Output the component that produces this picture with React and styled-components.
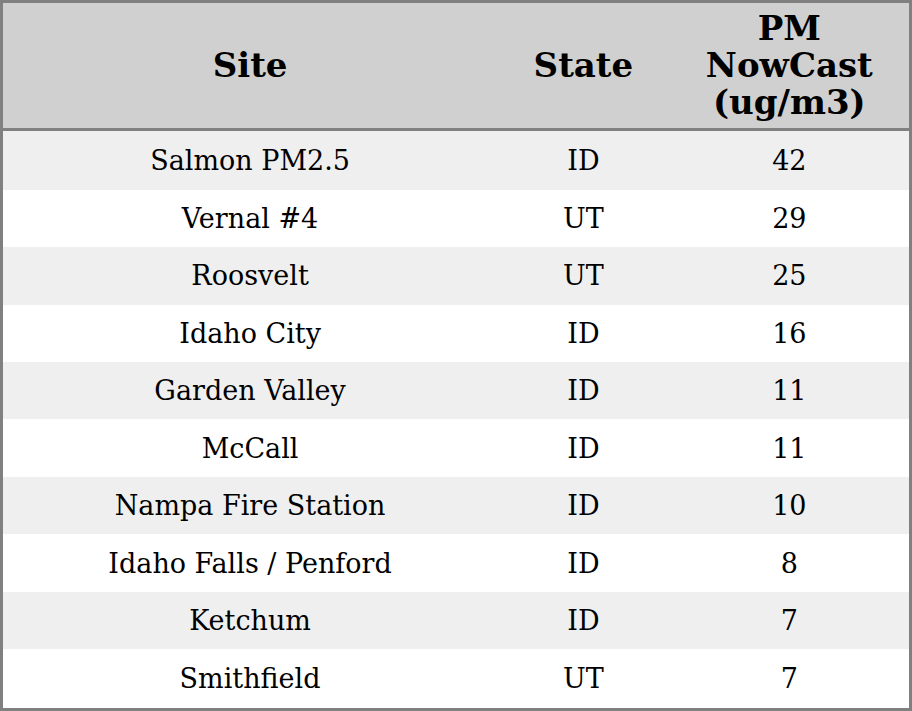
import React from 'react';
import styled, { createGlobalStyle } from 'styled-components';

const rows = [
  { site: 'Salmon PM2.5', state: 'ID', pm: 42 },
  { site: 'Vernal #4', state: 'UT', pm: 29 },
  { site: 'Roosvelt', state: 'UT', pm: 25 },
  { site: 'Idaho City', state: 'ID', pm: 16 },
  { site: 'Garden Valley', state: 'ID', pm: 11 },
  { site: 'McCall', state: 'ID', pm: 11 },
  { site: 'Nampa Fire Station', state: 'ID', pm: 10 },
  { site: 'Idaho Falls / Penford', state: 'ID', pm: 8 },
  { site: 'Ketchum', state: 'ID', pm: 7 },
  { site: 'Smithfield', state: 'UT', pm: 7 },
];

const GlobalStyle = createGlobalStyle`
  html, body, #root {
    margin: 0;
    height: 100%;
  }
  body {
    font-family: "DejaVu Serif", serif;
    background: #fff;
  }
`;

const Table = styled.table`
  width: 100%;
  height: 100%;
  border-collapse: collapse;
  border: 3px solid #808080;
  table-layout: fixed;
`;

const Col = styled.col`
  width: ${(p) => p.$w}px;
`;

const HeadCell = styled.th`
  background: #d0d0d0;
  border-bottom: 3px solid #808080;
  font-size: 34px;
  line-height: 37px;
  font-weight: bold;
  color: #000;
  text-align: center;
  padding: 0;
  height: 125px;
`;

const Row = styled.tr`
  background: ${(p) => (p.$odd ? '#efefef' : '#ffffff')};
`;

const Cell = styled.td`
  font-size: 27px;
  color: #000;
  text-align: center;
  padding: 0;
`;

const App = () => {
  return (
    <>
      <GlobalStyle />
      <Table>
        <colgroup>
          <Col $w={494} />
          <Col $w={172} />
          <Col $w={240} />
        </colgroup>
        <thead>
          <tr>
            <HeadCell>Site</HeadCell>
            <HeadCell>State</HeadCell>
            <HeadCell>
              PM
              <br />
              NowCast
              <br />
              (ug/m3)
            </HeadCell>
          </tr>
        </thead>
        <tbody>
          {rows.map((r, i) => (
            <Row key={r.site} $odd={i % 2 === 0}>
              <Cell>{r.site}</Cell>
              <Cell>{r.state}</Cell>
              <Cell>{r.pm}</Cell>
            </Row>
          ))}
        </tbody>
      </Table>
    </>
  );
};

export default App;
